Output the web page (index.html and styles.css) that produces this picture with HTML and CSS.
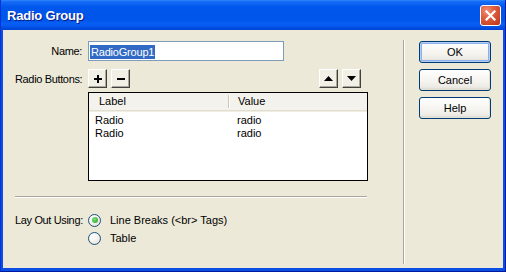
FILE: index.html
```html
<!DOCTYPE html>
<html lang="en">
<head>
  <meta charset="UTF-8" />
  <title>Radio Group</title>
  <link rel="stylesheet" href="styles.css">
</head>
<body>
  <div class="window">
    <div class="titlebar">
      <span class="title">Radio Group</span>
      <button class="close" title="Close">
        <svg width="11" height="11" viewBox="0 0 11 11">
          <path d="M1.5 1.5 L9.5 9.5 M9.5 1.5 L1.5 9.5" stroke="#fff" stroke-width="2.2" stroke-linecap="square" />
        </svg>
      </button>
    </div>

    <div class="client">
      <div class="main">
        <div class="form">
          <label class="lbl name-lbl" for="name">Name:</label>
          <div class="field" id="name"><span class="sel">RadioGroup1</span></div>

          <span class="lbl tools-lbl">Radio Buttons:</span>
          <div class="toolrow">
            <div class="tools">
              <button class="tb" title="Add">
                <svg width="8" height="8" viewBox="0 0 8 8"><rect x="0" y="3" width="8" height="2" /><rect x="3" y="0" width="2" height="8" /></svg>
              </button>
              <button class="tb" title="Remove">
                <svg width="8" height="8" viewBox="0 0 8 8"><rect x="0" y="3" width="8" height="2" /></svg>
              </button>
            </div>
            <div class="tools arrows">
              <button class="tb" title="Move up">
                <svg width="9" height="5" viewBox="0 0 9 5"><polygon points="0,5 9,5 4.5,0" /></svg>
              </button>
              <button class="tb" title="Move down">
                <svg width="9" height="5" viewBox="0 0 9 5"><polygon points="0,0 9,0 4.5,5" /></svg>
              </button>
            </div>
          </div>

          <span></span>
          <div class="list">
            <div class="list-head">
              <span class="col">Label</span>
              <span class="col col-2">Value</span>
            </div>
            <div class="list-body">
              <div class="list-row"><span>Radio</span><span class="col-2">radio</span></div>
              <div class="list-row"><span>Radio</span><span class="col-2">radio</span></div>
            </div>
          </div>
        </div>

        <div class="sep"></div>

        <div class="form layout">
          <span class="lbl">Lay Out Using:</span>
          <div class="options">
            <label class="opt"><span class="radio checked"></span>Line Breaks (&lt;br&gt; Tags)</label>
            <label class="opt"><span class="radio"></span>Table</label>
          </div>
        </div>
      </div>

      <div class="vline"></div>

      <div class="side">
        <button class="btn default">OK</button>
        <button class="btn">Cancel</button>
        <button class="btn">Help</button>
      </div>
    </div>
  </div>
</body>
</html>
```

FILE: styles.css
```css
* { margin: 0; padding: 0; box-sizing: border-box; }
body {
  font-family: 'Liberation Sans', Arial, sans-serif;
  font-size: 11px;
  color: #000;
  background: #fff;
}
button { font-family: inherit; font-size: 11px; color: #000; }

.window {
  width: 506px;
  height: 272px;
  display: flex;
  flex-direction: column;
  background: #0a4ee4;
  border-left: 1px solid #0831d9;
  border-right: 1px solid #0019a0;
  border-bottom: 1px solid #001a9c;
}

/* title bar */
.titlebar {
  height: 30px;
  flex: 0 0 30px;
  display: flex;
  align-items: center;
  justify-content: space-between;
  padding: 1px 4px 0 6px;
  background: linear-gradient(#3d8ffc 0, #1a6ff7 1px, #0c62f2 4px, #0057ec 7px, #0055ea 20px, #0860f5 24px, #0552e8 27px, #0046d6 29px);
}
.title {
  color: #fff;
  font-weight: bold;
  font-size: 13px;
  letter-spacing: -0.2px;
  text-shadow: 1px 1px #0a1883;
}
.close {
  width: 21px;
  height: 21px;
  border: 1px solid #fff;
  border-radius: 3px;
  display: flex;
  align-items: center;
  justify-content: center;
  background: radial-gradient(circle at 30% 25%, #f0907a 0, #e06242 35%, #cc4426 75%, #b83a1e 100%);
}

/* dialog body */
.client {
  flex: 1;
  margin: 0 2px 3px 2px;
  background: #ece9d8;
  display: flex;
}
.main {
  flex: 0 0 400px;
  padding: 11px 0 0 12px;
}
.form {
  display: grid;
  grid-template-columns: 67px 280px;
  column-gap: 6px;
  align-items: center;
}
.lbl {
  text-align: right;
  white-space: nowrap;
  letter-spacing: -0.35px;
}

.field {
  width: 196px;
  height: 20px;
  border: 1px solid #7f9db9;
  background: #fff;
  padding: 3px 0 0 1px;
}
.sel {
  display: inline-block;
  background: #316ac5;
  color: #fff;
  height: 14px;
  line-height: 14px;
  padding: 0 1px;
  letter-spacing: -0.2px;
}

.tools-lbl, .toolrow { margin-top: 8px; }
.toolrow {
  display: flex;
  justify-content: space-between;
  padding-right: 7px;
}
.tools { display: flex; gap: 4px; }
.tb {
  width: 19px;
  height: 19px;
  display: flex;
  align-items: center;
  justify-content: center;
  background: #f1efe6;
  border: 1px solid;
  border-color: #fff #404040 #404040 #fff;
  box-shadow: inset -1px -1px #aca899;
}
.tb svg { fill: #000; }

.list {
  margin-top: 4px;
  height: 89px;
  border: 1px solid #000;
  background: #fff;
}
.list-head {
  display: grid;
  grid-template-columns: 139px 1fr;
  height: 18px;
  background: #f3f2ec;
  border-bottom: 1px solid #e2decd;
  box-shadow: 0 1px #f0eee4;
}
.list-head .col {
  padding-left: 10px;
  line-height: 17px;
}
.list-head .col-2 {
  padding-left: 9px;
  border-left: 1px solid #cbc7b8;
  box-shadow: inset 1px 0 #fff;
  margin: 2px 0 3px;
  line-height: 13px;
}
.list-body { padding-top: 3px; }
.list-row {
  display: grid;
  grid-template-columns: 139px 1fr;
  height: 13px;
  line-height: 13px;
  padding-left: 6px;
}
.list-row .col-2 { padding-left: 3px; }

.sep {
  width: 352px;
  margin-top: 15px;
  border-top: 1px solid #aca899;
  border-bottom: 1px solid #fff;
}

.layout {
  margin-top: 13px;
  align-items: start;
}
.layout .lbl { line-height: 18px; }
.options { display: flex; flex-direction: column; }
.opt {
  display: flex;
  align-items: center;
  height: 18px;
  gap: 9px;
}
.radio {
  width: 13px;
  height: 13px;
  border-radius: 50%;
  border: 1px solid #1c5180;
  background: radial-gradient(circle at 35% 30%, #fff 0, #f6f5f0 40%, #dcd9cc 100%);
  display: flex;
  align-items: center;
  justify-content: center;
}
.radio.checked::after {
  content: "";
  width: 6px;
  height: 6px;
  border-radius: 50%;
  background: radial-gradient(circle at 40% 35%, #7fe07a 0, #21a121 100%);
}

/* right side */
.vline {
  width: 2px;
  margin: 10px 0 4px;
  border-left: 1px solid #aca899;
  border-right: 1px solid #fff;
}
.side {
  padding: 11px 0 0 14px;
  display: flex;
  flex-direction: column;
  gap: 6px;
}
.btn {
  width: 72px;
  height: 22px;
  border: 1px solid #003c74;
  border-radius: 3px;
  background: linear-gradient(#fff 0, #f6f5f1 50%, #ecebe5 85%, #d8d3c5 100%);
  box-shadow: inset -1px -1px #e3e0d5;
}
.btn.default {
  box-shadow: inset 0 0 0 1px #b4cdf4, inset 0 0 0 2px #8cb0ea;
}
```
